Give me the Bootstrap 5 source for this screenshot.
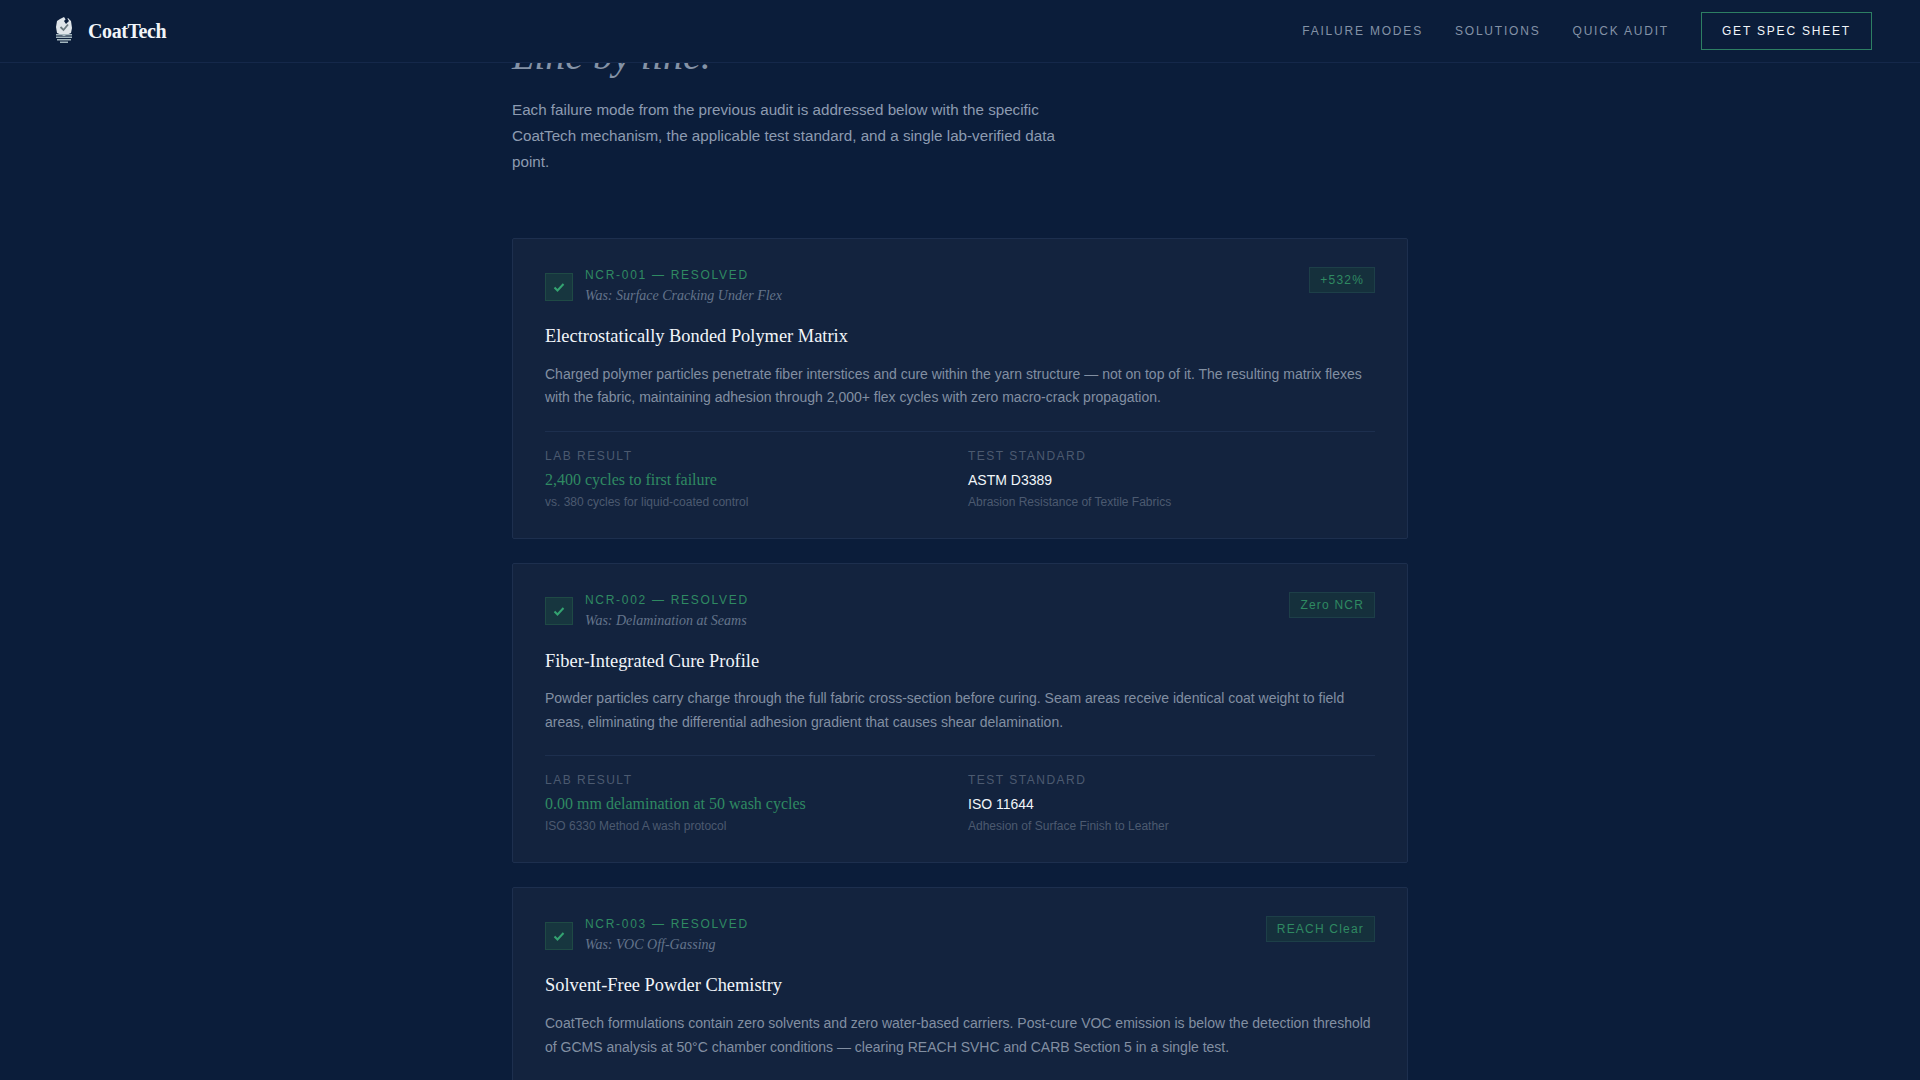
<!DOCTYPE html>
<html lang="en">
<head>
    <meta charset="UTF-8">
    <title>CoatTech</title>
    <link href="https://cdn.jsdelivr.net/npm/bootstrap@5.3.0/dist/css/bootstrap.min.css" rel="stylesheet">
    <style>
        html, body { height: 100%; overflow: hidden; }
        body { background: #0b1d3a; font-family: "Liberation Sans", Arial, sans-serif; color: #94a3b8; }
        .serif { font-family: "Liberation Serif", "Times New Roman", serif; }
        .top-bar { height: 63px; padding: 0 48px; background: #0b1d3a; border-bottom: 1px solid #15284a; }
        .brand-name { font-size: 20px; font-weight: 700; color: #f1f5f9; letter-spacing: -0.4px; }
        .top-link { font-size: 12px; letter-spacing: 1.8px; color: #8492a6; text-decoration: none; text-transform: uppercase; }
        .spec-btn { font-size: 12px; letter-spacing: 1.8px; color: #f1f5f9; border: 1px solid #2d7f63; border-radius: 0; padding: 11px 20px; line-height: 14px; text-transform: uppercase; }
        .page-wrap { width: 896px; margin: 0 auto; padding-top: 36px; }
        .big-title { font-size: 40px; font-style: italic; font-weight: 400; line-height: 40px; color: #8492a6; margin: 0 0 21px; }
        .intro { font-size: 15.2px; line-height: 26px; width: 560px; margin: 0 0 63px; color: #8d9bb1; }
        .ncr-card { background: #13233e; border: 1px solid #1d2f4e; border-radius: 2px; padding: 28px 32px 29px; margin-bottom: 24px; }
        .tick-box { width: 28px; height: 28px; margin-top: 5.5px; background: #17363f; border: 1px solid #1f4a45; }
        .ncr-copy { padding-top: 1px; }
        .ncr-code { font-size: 12px; letter-spacing: 1.7px; line-height: 14px; color: #2f8a62; }
        .ncr-was { font-size: 14px; font-style: italic; line-height: 22px; color: #64748b; margin-top: 3px; }
        .ncr-tag { font-size: 12px; letter-spacing: 1.2px; line-height: 14px; color: #2f8a62; background: #15303c; border: 1px solid #1d3f48; padding: 5px 10px; }
        .ncr-title { font-size: 18.4px; font-weight: 400; line-height: 24px; color: #f1f5f9; margin: 17px 0 14.6px; }
        .ncr-text { font-size: 14px; line-height: 23.8px; margin: 0 0 20.4px; color: #828fa2; }
        .ncr-stats { border-top: 1px solid #1d2f4e; padding-top: 17px; }
        .stat-label { font-size: 12px; letter-spacing: 1.5px; line-height: 14px; color: #4c5a70; }
        .stat-green { font-size: 16px; line-height: 20px; color: #2f8a62; margin-top: 7px; }
        .stat-white { font-size: 14px; line-height: 20px; color: #f1f5f9; margin-top: 7px; }
        .stat-note { font-size: 12px; line-height: 14px; color: #4c5a70; margin-top: 5px; }
    </style>
</head>
<body>

<nav class="top-bar fixed-top d-flex align-items-center justify-content-between">
    <div class="d-flex align-items-center gap-2">
        <svg width="32" height="32" viewBox="0 0 32 32">
            <path d="M12 4 L16 2 L18 5 L20 3 L23 6 L24 13 L23 18 L16 21 L9 18 L8 12 L9 6 Z" fill="#dfe5ea"/>
            <path d="M16 6 L19 3 L21 6 L18 9 Z" fill="#0b1d3a"/>
            <path d="M12.5 12 L15.5 15 L20 9.5" fill="none" stroke="#6b7a80" stroke-width="1.8"/>
            <g fill="#a3b6be">
                <rect x="8" y="19" width="16" height="1.5"/>
                <rect x="8" y="21.5" width="16" height="1.5"/>
                <rect x="9" y="24" width="14" height="1.5"/>
                <rect x="12" y="26.5" width="8" height="1.5"/>
            </g>
        </svg>
        <span class="brand-name serif">CoatTech</span>
    </div>
    <div class="d-flex align-items-center gap-4">
        <a class="top-link me-2" href="#">Failure Modes</a>
        <a class="top-link" href="#">Solutions</a>
        <a class="top-link ms-2" href="#">Quick Audit</a>
        <button class="btn spec-btn ms-2">Get Spec Sheet</button>
    </div>
</nav>

<main class="page-wrap">
    <h2 class="big-title serif">Line by line.</h2>
    <p class="intro">Each failure mode from the previous audit is addressed below with the specific CoatTech mechanism, the applicable test standard, and a single lab-verified data point.</p>

    <section class="ncr-card">
        <div class="d-flex justify-content-between align-items-start">
            <div class="d-flex align-items-start gap-2">
                <div class="tick-box d-flex align-items-center justify-content-center me-1">
                    <svg width="14" height="14" viewBox="0 0 14 14"><path d="M2.5 7.5 L5.5 10.5 L11.5 4" fill="none" stroke="#34a371" stroke-width="2"/></svg>
                </div>
                <div class="ncr-copy">
                    <div class="ncr-code">NCR-001 — RESOLVED</div>
                    <div class="ncr-was serif">Was: Surface Cracking Under Flex</div>
                </div>
            </div>
            <span class="ncr-tag">+532%</span>
        </div>
        <h3 class="ncr-title serif">Electrostatically Bonded Polymer Matrix</h3>
        <p class="ncr-text">Charged polymer particles penetrate fiber interstices and cure within the yarn structure — not on top of it. The resulting matrix flexes with the fabric, maintaining adhesion through 2,000+ flex cycles with zero macro-crack propagation.</p>
        <div class="ncr-stats row g-0">
            <div class="col-6">
                <div class="stat-label">LAB RESULT</div>
                <div class="stat-green serif">2,400 cycles to first failure</div>
                <div class="stat-note">vs. 380 cycles for liquid-coated control</div>
            </div>
            <div class="col-6 ps-2">
                <div class="stat-label">TEST STANDARD</div>
                <div class="stat-white">ASTM D3389</div>
                <div class="stat-note">Abrasion Resistance of Textile Fabrics</div>
            </div>
        </div>
    </section>

    <section class="ncr-card">
        <div class="d-flex justify-content-between align-items-start">
            <div class="d-flex align-items-start gap-2">
                <div class="tick-box d-flex align-items-center justify-content-center me-1">
                    <svg width="14" height="14" viewBox="0 0 14 14"><path d="M2.5 7.5 L5.5 10.5 L11.5 4" fill="none" stroke="#34a371" stroke-width="2"/></svg>
                </div>
                <div class="ncr-copy">
                    <div class="ncr-code">NCR-002 — RESOLVED</div>
                    <div class="ncr-was serif">Was: Delamination at Seams</div>
                </div>
            </div>
            <span class="ncr-tag">Zero NCR</span>
        </div>
        <h3 class="ncr-title serif">Fiber-Integrated Cure Profile</h3>
        <p class="ncr-text">Powder particles carry charge through the full fabric cross-section before curing. Seam areas receive identical coat weight to field areas, eliminating the differential adhesion gradient that causes shear delamination.</p>
        <div class="ncr-stats row g-0">
            <div class="col-6">
                <div class="stat-label">LAB RESULT</div>
                <div class="stat-green serif">0.00 mm delamination at 50 wash cycles</div>
                <div class="stat-note">ISO 6330 Method A wash protocol</div>
            </div>
            <div class="col-6 ps-2">
                <div class="stat-label">TEST STANDARD</div>
                <div class="stat-white">ISO 11644</div>
                <div class="stat-note">Adhesion of Surface Finish to Leather</div>
            </div>
        </div>
    </section>

    <section class="ncr-card">
        <div class="d-flex justify-content-between align-items-start">
            <div class="d-flex align-items-start gap-2">
                <div class="tick-box d-flex align-items-center justify-content-center me-1">
                    <svg width="14" height="14" viewBox="0 0 14 14"><path d="M2.5 7.5 L5.5 10.5 L11.5 4" fill="none" stroke="#34a371" stroke-width="2"/></svg>
                </div>
                <div class="ncr-copy">
                    <div class="ncr-code">NCR-003 — RESOLVED</div>
                    <div class="ncr-was serif">Was: VOC Off-Gassing</div>
                </div>
            </div>
            <span class="ncr-tag">REACH Clear</span>
        </div>
        <h3 class="ncr-title serif">Solvent-Free Powder Chemistry</h3>
        <p class="ncr-text">CoatTech formulations contain zero solvents and zero water-based carriers. Post-cure VOC emission is below the detection threshold of GCMS analysis at 50°C chamber conditions — clearing REACH SVHC and CARB Section 5 in a single test.</p>
        <div class="ncr-stats"></div>
    </section>
</main>

<script src="https://cdn.jsdelivr.net/npm/bootstrap@5.3.0/dist/js/bootstrap.bundle.min.js"></script>
</body>
</html>
